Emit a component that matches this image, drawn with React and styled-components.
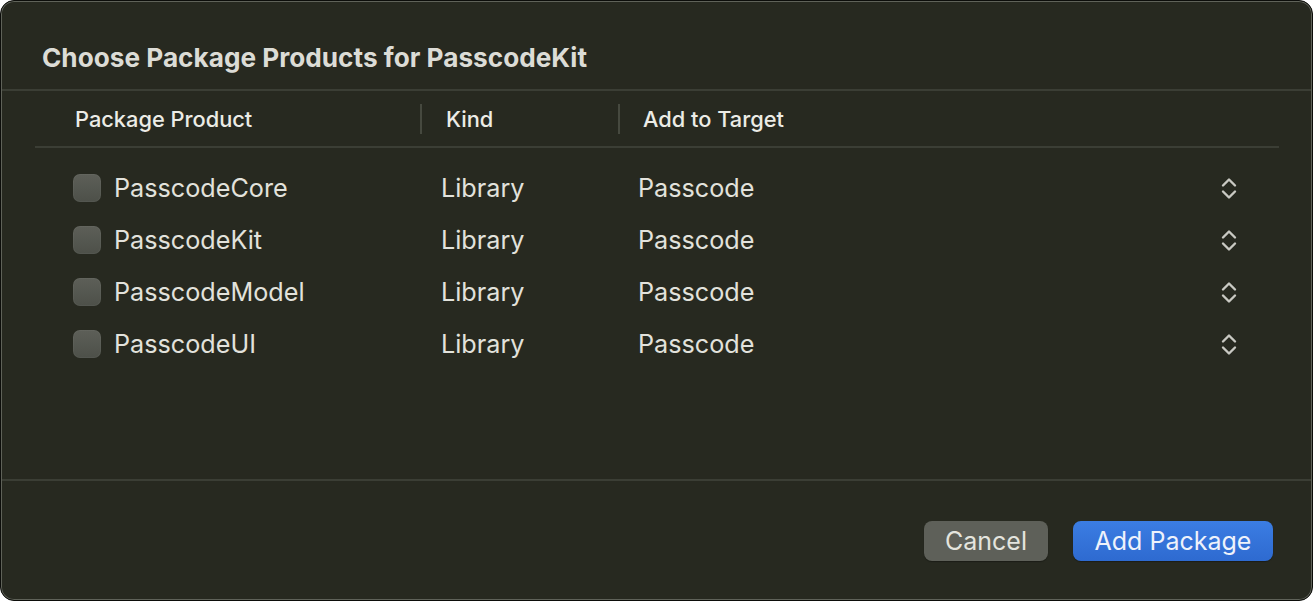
import styled, { createGlobalStyle } from "styled-components";

const Global = createGlobalStyle`
  html, body {
    margin: 0;
    padding: 0;
    background: #ffffff;
  }
  body {
    font-family: "Inter", "Noto Sans", sans-serif;
    -webkit-font-smoothing: antialiased;
  }
`;

const Sheet = styled.div`
  box-sizing: border-box;
  width: 1313px;
  height: 601px;
  display: flex;
  flex-direction: column;
  background: #272920;
  border: 1px solid #0c0d0a;
  border-radius: 14px;
  box-shadow: inset 0 0 0 1px #5f6259;
  overflow: hidden;
`;

const TitleBar = styled.div`
  height: 88px;
  padding: 40px 0 0 41px;
  box-sizing: border-box;
`;

const Title = styled.h1`
  margin: 0;
  font-size: 26.2px;
  line-height: 34px;
  font-weight: 700;
  color: #dcdcd6;
  letter-spacing: 0;
`;

const Rule = styled.div`
  height: 2px;
  background: #3b3e35;
  margin: ${p => p.$inset ? "0 33px 0 34px" : "0 1px"};
`;

const Header = styled.div`
  display: flex;
  align-items: center;
  height: 55px;
  margin: 0 33px 0 34px;
`;

const HeadCell = styled.div`
  box-sizing: border-box;
  width: ${p => p.$w ? p.$w + "px" : "auto"};
  flex: ${p => p.$w ? "none" : "1"};
  padding-left: ${p => p.$pad}px;
  font-size: 21.8px;
  font-weight: 500;
  color: #ecece6;
`;

const Divider = styled.div`
  width: 2px;
  height: 30px;
  background: #46493f;
`;

const Body = styled.div`
  flex: 1;
  padding-top: 14px;
  margin: 0 33px 0 34px;
`;

const Row = styled.div`
  display: grid;
  grid-template-columns: 385px 198px 1fr auto;
  align-items: center;
  height: 52px;
  padding-right: 42px;
  font-size: 25.2px;
  color: #e2e2dc;
`;

const NameCell = styled.div`
  display: flex;
  align-items: center;
  gap: 13px;
  padding-left: 38px;
`;

const Check = styled.span`
  width: 28px;
  height: 28px;
  border-radius: 7px;
  background: linear-gradient(#5d5f58, #4d5049);
  box-shadow: inset 0 0 0 1px rgba(255, 255, 255, 0.04);
`;

const TextCell = styled.div`
  padding-left: ${p => p.$pad}px;
`;

const Chevrons = () => (
  <svg width="16" height="23" viewBox="0 0 16 23" fill="none" stroke="#c9c9c3" strokeWidth="2.4" strokeLinecap="round" strokeLinejoin="round">
    <path d="M2 8.5 L8 2.5 L14 8.5" />
    <path d="M2 14.5 L8 20.5 L14 14.5" />
  </svg>
);

const Footer = styled.div`
  display: flex;
  justify-content: flex-end;
  gap: 25px;
  height: 119px;
  padding: 40px 39px 0 0;
  box-sizing: border-box;
`;

const Button = styled.button`
  width: ${p => p.$primary ? 200 : 124}px;
  height: 40px;
  padding: 0;
  border: none;
  border-radius: 8px;
  font-family: inherit;
  font-size: 25px;
  color: ${p => p.$primary ? "#eef2fb" : "#e4e4de"};
  background: ${p => p.$primary ? "linear-gradient(#3b7de3, #2e6ad0)" : "#5e6059"};
  box-shadow: 0 1px 1px rgba(0, 0, 0, 0.3);
`;

const products = ["PasscodeCore", "PasscodeKit", "PasscodeModel", "PasscodeUI"];

export default function App() {
  return (
    <>
      <Global />
      <Sheet>
        <TitleBar>
          <Title>Choose Package Products for PasscodeKit</Title>
        </TitleBar>
        <Rule />
        <Header>
          <HeadCell $w={385} $pad={40}>Package Product</HeadCell>
          <Divider />
          <HeadCell $w={196} $pad={24}>Kind</HeadCell>
          <Divider />
          <HeadCell $pad={23}>Add to Target</HeadCell>
        </Header>
        <Rule $inset />
        <Body>
          {products.map(name => (
            <Row key={name}>
              <NameCell>
                <Check />
                {name}
              </NameCell>
              <TextCell $pad={21}>Library</TextCell>
              <TextCell $pad={20}>Passcode</TextCell>
              <Chevrons />
            </Row>
          ))}
        </Body>
        <Rule />
        <Footer>
          <Button>Cancel</Button>
          <Button $primary>Add Package</Button>
        </Footer>
      </Sheet>
    </>
  );
}
